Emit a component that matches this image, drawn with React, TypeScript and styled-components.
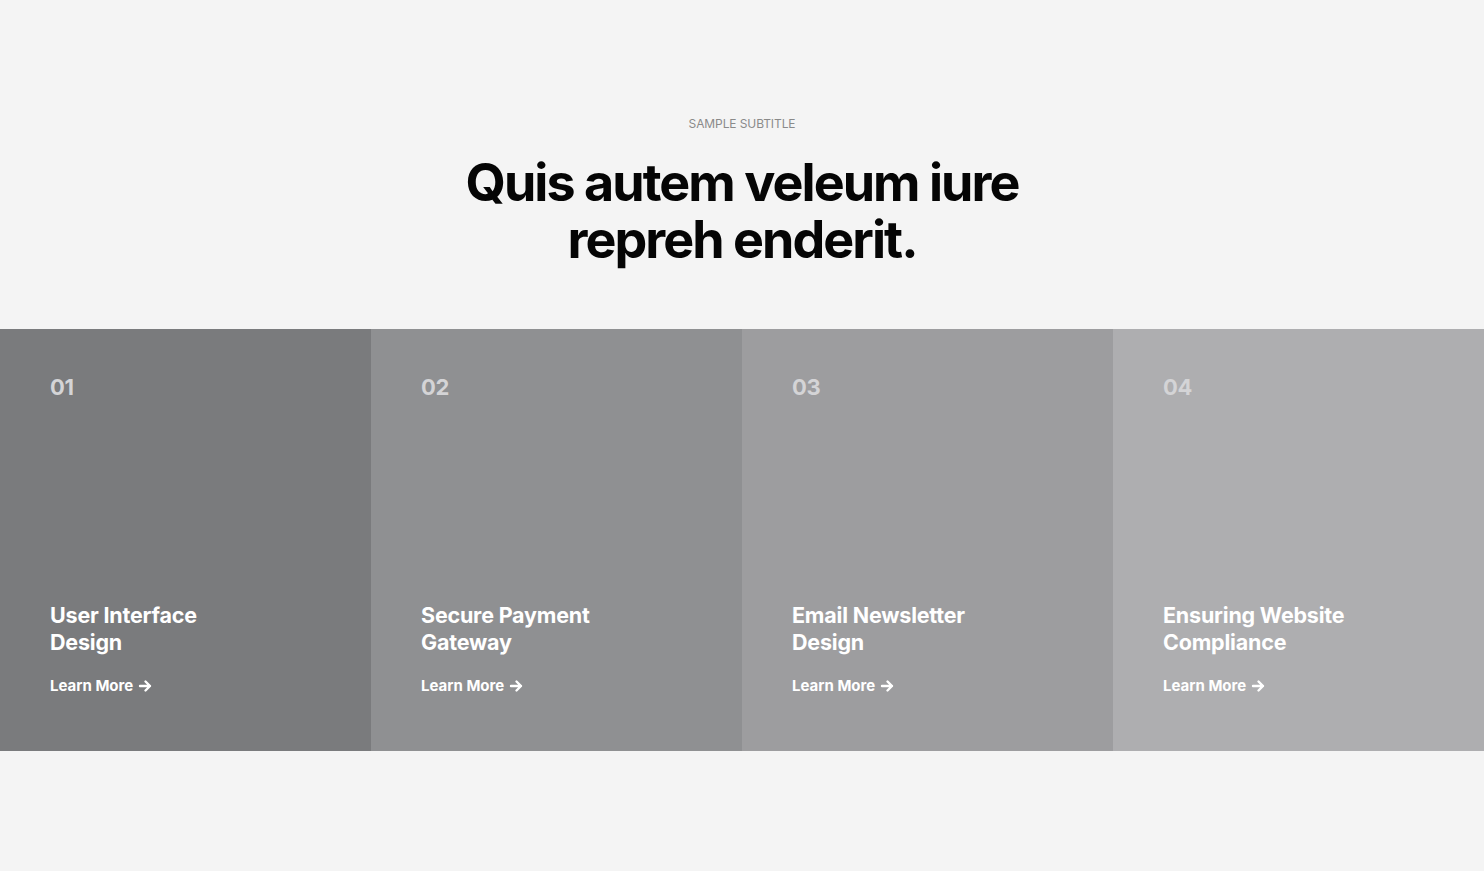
import React from "react";
import styled, { createGlobalStyle } from "styled-components";

const Global = createGlobalStyle`
  html, body { margin: 0; padding: 0; background: #f4f4f4; }
  body { font-family: Inter, "Noto Sans", "Liberation Sans", sans-serif; }
  * { box-sizing: border-box; }
`;

const Section = styled.section`
  background: #f4f4f4;
  padding: 116px 0 120px;
  min-height: 871px;
`;

const Header = styled.header`
  display: flex;
  flex-direction: column;
  align-items: center;
  text-align: center;
  margin-bottom: 61px;
`;

const Subtitle = styled.div`
  font-size: 12px;
  color: #8a8a8a;
  letter-spacing: -0.1px;
  text-transform: uppercase;
  line-height: 16px;
  margin-bottom: 22px;
`;

const Heading = styled.h2`
  margin: 0;
  font-size: 52px;
  line-height: 57px;
  font-weight: 700;
  letter-spacing: -1.95px;
  color: #050505;
  max-width: 620px;
`;

const Grid = styled.div`
  display: grid;
  grid-template-columns: repeat(4, 1fr);
`;

const Card = styled.article<{ $bg: string }>`
  background: ${(p) => p.$bg};
  height: 422px;
  padding: 44px 50px 56px;
  display: flex;
  flex-direction: column;
  justify-content: space-between;
`;

const Num = styled.div`
  font-size: 22px;
  font-weight: 700;
  color: #d4d4d6;
  letter-spacing: -0.3px;
  line-height: 28px;
`;

const Bottom = styled.div`
  display: flex;
  flex-direction: column;
`;

const Title = styled.h3`
  margin: 0 0 21px;
  font-size: 21.5px;
  line-height: 27px;
  font-weight: 700;
  color: #ffffff;
  letter-spacing: -0.2px;
  max-width: 210px;
`;

const More = styled.a`
  display: inline-flex;
  align-items: center;
  gap: 5px;
  font-size: 15px;
  font-weight: 700;
  color: #ffffff;
  letter-spacing: 0;
  line-height: 18px;
  text-decoration: none;
`;

const Arrow = () => (
  <svg width="14" height="14" viewBox="0 0 14 14" fill="none" stroke="#fff" strokeWidth="2.4" strokeLinecap="round" strokeLinejoin="round">
    <path d="M2 7h10M7.5 2.5 12 7l-4.5 4.5" />
  </svg>
);

const items = [
  { n: "01", t: "User Interface Design", bg: "#7a7b7d" },
  { n: "02", t: "Secure Payment Gateway", bg: "#8f9092" },
  { n: "03", t: "Email Newsletter Design", bg: "#9d9d9f" },
  { n: "04", t: "Ensuring Website Compliance", bg: "#aeaeb0" },
];

export default function App() {
  return (
    <>
      <Global />
      <Section>
        <Header>
          <Subtitle>Sample Subtitle</Subtitle>
          <Heading>Quis autem veleum iure repreh enderit.</Heading>
        </Header>
        <Grid>
          {items.map((it) => (
            <Card key={it.n} $bg={it.bg}>
              <Num>{it.n}</Num>
              <Bottom>
                <Title>{it.t}</Title>
                <More href="#">
                  Learn More <Arrow />
                </More>
              </Bottom>
            </Card>
          ))}
        </Grid>
      </Section>
    </>
  );
}
